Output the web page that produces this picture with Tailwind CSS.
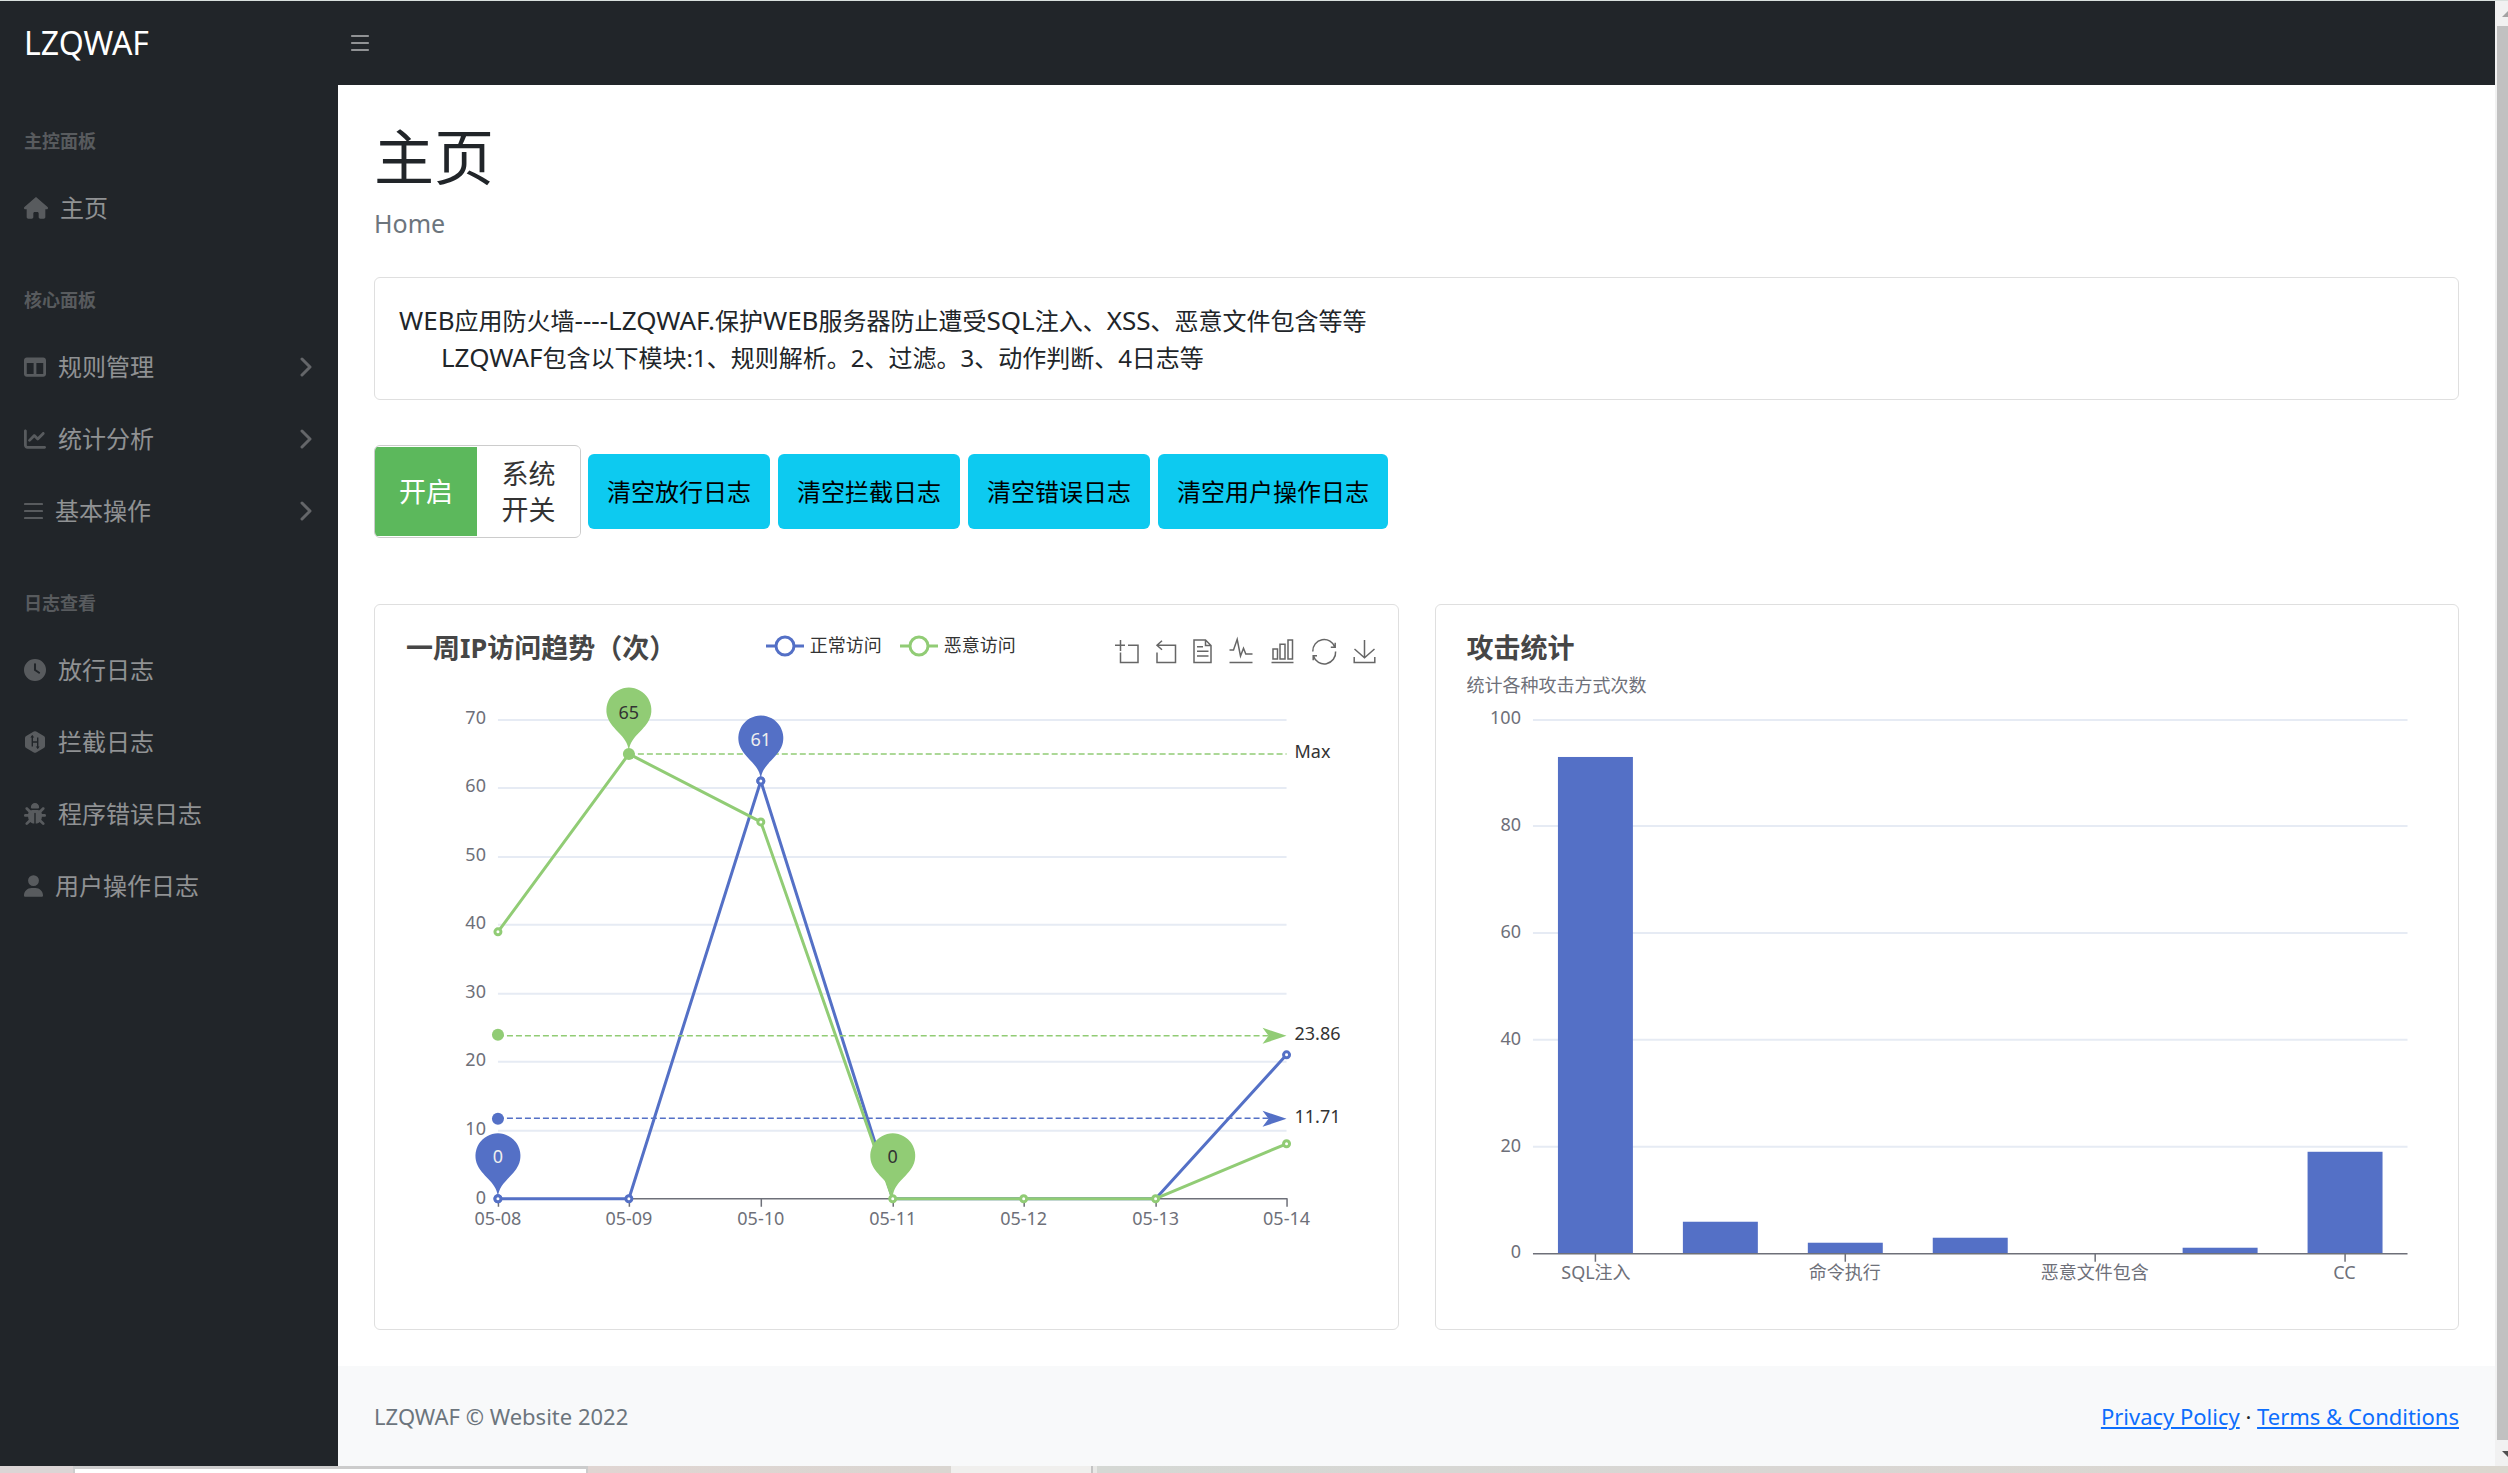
<!DOCTYPE html>
<html lang="zh-CN">
<head>
<meta charset="utf-8">
<title>LZQWAF</title>
<script src="https://cdn.jsdelivr.net/npm/@tailwindcss/browser@4"></script>
</head>
<body class="bg-white font-['Noto_Sans','Noto_Sans_CJK_SC',sans-serif] text-[24px] leading-9 text-[#212529]">
<div class="flex min-h-screen flex-col">
  <div class="h-px bg-[#d9e0dd]"></div>
  <div class="flex flex-1">
    <div class="flex min-w-0 flex-1 flex-col">
      <header class="flex h-[84px] items-center bg-[#212529]">
        <a href="#" class="w-[338px] pl-6 text-[32px] text-white">LZQWAF</a>
        <button type="button" aria-label="切换菜单" class="ml-3 text-white/50">
          <svg class="h-5 w-5" viewBox="0 0 20 20" stroke="currentColor" stroke-width="2.2" stroke-linecap="round"><path d="M2 3h16M2 10h16M2 17h16"/></svg>
        </button>
      </header>
      <div class="flex flex-1">
        <nav class="w-[338px] shrink-0 bg-[#212529] text-white/50">
          <h2 class="px-6 pt-[43px] pb-[17px] text-[18px] leading-[27px] font-bold text-white/25">主控面板</h2>
          <a href="#" class="flex h-[72px] items-center px-6">
            <svg class="mr-3 h-[22px] w-6 text-white/25" viewBox="0 0 576 512" fill="currentColor"><path d="M575.8 255.5c0 18-15 32.1-32 32.1h-32l.7 160.2c0 2.7-.2 5.4-.5 8.1V472c0 22.1-17.9 40-40 40H456c-1.1 0-2.2 0-3.3-.1c-1.4 .1-2.8 .1-4.2 .1H416 392c-22.1 0-40-17.9-40-40V448 384c0-17.7-14.3-32-32-32H256c-17.7 0-32 14.3-32 32v64 24c0 22.1-17.9 40-40 40H160 128.1c-1.5 0-3-.1-4.5-.2c-1.2 .1-2.4 .2-3.6 .2H104c-22.1 0-40-17.9-40-40V360c0-.9 0-1.9 .1-2.8V287.6H32c-18 0-32-14-32-32.1c0-9 3-17 10-24L266.4 8c7-7 15-8 22-8s15 2 21 7L564.8 231.5c8 7 12 15 11 24z"/></svg>主页</a>
          <h2 class="px-6 pt-[43px] pb-[17px] text-[18px] leading-[27px] font-bold text-white/25">核心面板</h2>
          <a href="#" class="flex h-[72px] items-center px-6">
            <svg class="mr-3 h-[22px] w-[22px] text-white/25" viewBox="0 0 512 512" fill="currentColor"><path d="M0 96C0 60.7 28.7 32 64 32H448c35.3 0 64 28.7 64 64V416c0 35.3-28.7 64-64 64H64c-35.3 0-64-28.7-64-64V96zm64 64V416H224V160H64zm384 0H288V416H448V160z"/></svg>规则管理
            <svg class="ml-auto h-5 w-4 text-white/30" viewBox="0 0 16 20" fill="none" stroke="currentColor" stroke-width="3" stroke-linecap="round" stroke-linejoin="round"><path d="M4 2l8 8-8 8"/></svg></a>
          <a href="#" class="flex h-[72px] items-center px-6">
            <svg class="mr-3 h-[22px] w-[22px] text-white/25" viewBox="0 0 512 512" fill="currentColor"><path d="M64 64c0-17.7-14.3-32-32-32S0 46.3 0 64V400c0 44.2 35.8 80 80 80H480c17.7 0 32-14.3 32-32s-14.3-32-32-32H80c-8.8 0-16-7.2-16-16V64zm406.6 86.6c12.5-12.5 12.5-32.8 0-45.3s-32.8-12.5-45.3 0L320 210.7l-57.4-57.4c-12.5-12.5-32.8-12.5-45.3 0l-112 112c-12.5 12.5-12.5 32.8 0 45.3s32.8 12.5 45.3 0L240 221.3l57.4 57.4c12.5 12.5 32.8 12.5 45.3 0l128-128z"/></svg>统计分析
            <svg class="ml-auto h-5 w-4 text-white/30" viewBox="0 0 16 20" fill="none" stroke="currentColor" stroke-width="3" stroke-linecap="round" stroke-linejoin="round"><path d="M4 2l8 8-8 8"/></svg></a>
          <a href="#" class="flex h-[72px] items-center px-6">
            <svg class="mr-3 h-[22px] w-[19px] text-white/25" viewBox="0 0 19 22" stroke="currentColor" stroke-width="2.2" stroke-linecap="round"><path d="M1 4h17M1 11h17M1 18h17"/></svg>基本操作
            <svg class="ml-auto h-5 w-4 text-white/30" viewBox="0 0 16 20" fill="none" stroke="currentColor" stroke-width="3" stroke-linecap="round" stroke-linejoin="round"><path d="M4 2l8 8-8 8"/></svg></a>
          <h2 class="px-6 pt-[43px] pb-[17px] text-[18px] leading-[27px] font-bold text-white/25">日志查看</h2>
          <a href="#" class="flex h-[72px] items-center px-6">
            <svg class="mr-3 h-[22px] w-[22px] text-white/25" viewBox="0 0 512 512" fill="currentColor"><path d="M256 0a256 256 0 1 1 0 512A256 256 0 1 1 256 0zM232 120V256c0 8 4 15.5 10.7 20l96 64c11 7.4 25.9 4.4 33.3-6.7s4.4-25.9-6.7-33.3L280 243.2V120c0-13.3-10.7-24-24-24s-24 10.7-24 24z"/></svg>放行日志</a>
          <a href="#" class="flex h-[72px] items-center px-6">
            <svg class="mr-3 h-[22px] w-[22px]" viewBox="0 0 22 22"><path fill="#595c5f" d="M9.8 .6Q11 0 12.2 .6L19.8 4.9Q21 5.6 21 6.9V15.1Q21 16.4 19.8 17.1L12.2 21.4Q11 22 9.8 21.4L2.2 17.1Q1 16.4 1 15.1V6.9Q1 5.6 2.2 4.9Z"/><path fill="none" stroke="#212529" stroke-width="1.4" d="M8.3 4.8V15.6M13.7 6.4V17.2M8.3 11h5.4"/><path fill="#212529" d="M6.4 6.6 8.3 4l1.9 2.6zM11.8 15.4l1.9 2.6 1.9-2.6z"/></svg>拦截日志</a>
          <a href="#" class="flex h-[72px] items-center px-6">
            <svg class="mr-3 h-[22px] w-[22px] text-white/25" viewBox="0 0 512 512" fill="currentColor"><path d="M256 0c53 0 96 43 96 96v3.6c0 15.7-12.7 28.4-28.4 28.4H188.4c-15.7 0-28.4-12.7-28.4-28.4V96c0-53 43-96 96-96zM41.4 105.4c12.5-12.5 32.8-12.5 45.3 0l64 64c.7 .7 1.3 1.4 1.9 2.1c14.2-7.3 30.4-11.4 47.5-11.4H312c17.1 0 33.2 4.1 47.5 11.4c.6-.7 1.2-1.4 1.9-2.1l64-64c12.5-12.5 32.8-12.5 45.3 0s12.5 32.8 0 45.3l-64 64c-.7 .7-1.4 1.3-2.1 1.9c6.2 12 10.1 25.3 11.1 39.5H480c17.7 0 32 14.3 32 32s-14.3 32-32 32H416c0 24.6-5.5 47.8-15.4 68.6c2.2 1.3 4.2 2.9 6 4.8l64 64c12.5 12.5 12.5 32.8 0 45.3s-32.8 12.5-45.3 0l-63.1-63.1c-24.5 21.8-55.8 36.2-90.3 39.6V240c0-8.8-7.2-16-16-16s-16 7.2-16 16V479.2c-34.5-3.4-65.8-17.8-90.3-39.6L86.6 502.6c-12.5 12.5-32.8 12.5-45.3 0s-12.5-32.8 0-45.3l64-64c1.9-1.9 3.9-3.4 6-4.8C101.5 367.8 96 344.6 96 320H32c-17.7 0-32-14.3-32-32s14.3-32 32-32H96.3c1.1-14.1 5-27.5 11.1-39.5c-.7-.6-1.4-1.2-2.1-1.9l-64-64c-12.5-12.5-12.5-32.8 0-45.3z"/></svg>程序错误日志</a>
          <a href="#" class="flex h-[72px] items-center px-6">
            <svg class="mr-3 h-[22px] w-[19px] text-white/25" viewBox="0 0 448 512" fill="currentColor"><path d="M224 256A128 128 0 1 0 224 0a128 128 0 1 0 0 256zm-45.7 48C79.8 304 0 383.8 0 482.3C0 498.7 13.3 512 29.7 512H418.3c16.4 0 29.7-13.3 29.7-29.7C448 383.8 368.2 304 269.7 304H178.3z"/></svg>用户操作日志</a>
        </nav>
        <div class="flex min-w-0 flex-1 flex-col">
          <main class="flex-1 px-9 pt-9">
            <h1 class="mb-3 text-[60px] leading-[72px]">主页</h1>
            <p class="mb-9 text-[25px] text-[#6c757d]">Home</p>
            <section class="h-[123px] rounded-md border border-[#dfdfdf] px-6 py-6">
              <p><span class="text-[26px]">WEB</span>应用防火墙<span class="text-[26px]">----LZQWAF.</span>保护<span class="text-[26px]">WEB</span>服务器防止遭受<span class="text-[26px]">SQL</span>注入、<span class="text-[26px]">XSS</span>、恶意文件包含等等</p>
              <p class="pl-[42px]"><span class="text-[26px]">LZQWAF</span>包含以下模块:1、规则解析。2、过滤。3、动作判断、4日志等</p>
            </section>
            <div class="mt-[45px] flex items-center gap-2">
              <button type="button" role="switch" aria-checked="true" class="-mr-px flex h-[93px] overflow-hidden rounded-md border border-[#ccc] py-px text-[27px]">
                <span class="flex w-[102px] items-center justify-center self-stretch bg-[#5cb85c] text-white">开启</span>
                <span class="flex w-[103px] items-center justify-center self-stretch bg-white text-[#333]">系统<br>开关</span>
              </button>
              <button type="button" class="h-[75px] rounded-md bg-[#0dcaf0] px-[19px] text-black">清空放行日志</button>
              <button type="button" class="h-[75px] rounded-md bg-[#0dcaf0] px-[19px] text-black">清空拦截日志</button>
              <button type="button" class="h-[75px] rounded-md bg-[#0dcaf0] px-[19px] text-black">清空错误日志</button>
              <button type="button" class="h-[75px] rounded-md bg-[#0dcaf0] px-[19px] text-black">清空用户操作日志</button>
            </div>

            <div class="mt-[66px] mb-9 grid grid-cols-2 gap-9">
              <section class="rounded-md border border-[#dfdfdf]">
                <div class="grid grid-cols-[1fr_auto_1fr] items-center pt-6 pr-[22px] pl-[31px]">
                  <h2 class="pb-0.5 text-[27px] leading-[38px] font-bold text-[#464646]">一周IP访问趋势（次）</h2>
                  <div class="flex items-center gap-[18px] pb-2 text-[18px] leading-6 text-[#333]">
                    <span class="flex items-center gap-1.5"><svg class="h-6 w-[38px]" viewBox="0 0 38 24" fill="#fff" stroke="#5470c6" stroke-width="3"><path d="M0 13h38"/><circle cx="19" cy="13" r="9"/></svg>正常访问</span>
                    <span class="flex items-center gap-1.5"><svg class="h-6 w-[38px]" viewBox="0 0 38 24" fill="#fff" stroke="#91cc75" stroke-width="3"><path d="M0 13h38"/><circle cx="19" cy="13" r="9"/></svg>恶意访问</span>
                  </div>
                  <div class="flex justify-end gap-4 text-[#666]">
                    <button type="button" aria-label="区域缩放"><svg class="block h-7 w-6 overflow-visible" viewBox="0 -4 24 28" fill="none" stroke="currentColor" stroke-width="1.5"><path d="M3 6.3H13M8.5 1V12M16 6.3H26V23.5H8.5V13.5"/></svg></button>
                    <button type="button" aria-label="区域缩放还原"><svg class="block h-7 w-6 overflow-visible" viewBox="0 -4 24 28" fill="none" stroke="currentColor" stroke-width="1.5"><path d="M10 1.7L5 6.3L10 10.7M5 6.3H23.5V23.5H5V13.5"/></svg></button>
                    <button type="button" aria-label="数据视图"><svg class="block h-7 w-6 overflow-visible" viewBox="0 -4 24 28" fill="none" stroke="currentColor" stroke-width="1.5"><path d="M2 1H13.5L19 6.5V23.5H2ZM13.5 1V6.5H19M5 7.7H11M5 12.3H16.5M5 17H16.5"/></svg></button>
                    <button type="button" aria-label="切换为折线图"><svg class="block h-7 w-6 overflow-visible" viewBox="0 -4 24 28" fill="none" stroke="currentColor" stroke-width="1.5"><path d="M-2.5 11H1.5L5.2 .3L8.5 17L11.5 9.3L13.8 15H20.5M-2.5 23.5H20.5"/></svg></button>
                    <button type="button" aria-label="切换为柱状图"><svg class="block h-7 w-6 overflow-visible" viewBox="0 -4 24 28" fill="none" stroke="currentColor" stroke-width="1.5"><path d="M1 10H5.5V20H1ZM8 5.3H13V20H8ZM16 1H20.5V20H16ZM-.5 23.5H21.5"/></svg></button>
                    <button type="button" aria-label="还原"><svg class="block h-7 w-6 overflow-visible" viewBox="0 -4 24 28" fill="none" stroke="currentColor" stroke-width="1.5"><path d="M.8 12.5A11.4 11.4 0 0 1 23 8.3M18.8 8.3H23.2V3.8M23.6 12.5A11.4 11.4 0 0 1 1.4 17M1.2 21.2V16.7H5"/></svg></button>
                    <button type="button" aria-label="保存为图片"><svg class="block h-7 w-6 overflow-visible" viewBox="0 -4 24 28" fill="none" stroke="currentColor" stroke-width="1.5"><path d="M12.5 1V18.7M2.5 10L12.5 18.7L22.5 10M2.2 18V23.5H22.8V18"/></svg></button>
                  </div>
                </div>
                <svg class="block h-auto w-full" viewBox="0 0 1023 660" role="img" aria-label="一周IP访问趋势" font-size="18">
                  <defs><path id="pin" d="M-20.3-33.2A22.5 22.5 0 1 1 20.3-33.2C14.5-21 0-15.7 0 0C0-15.7-14.5-21-20.3-33.2Z"/></defs>
                  <path stroke="#e6ebf4" stroke-width="2" d="M123 51H912M123 119H912M123 188H912M123 256H912M123 325H912M123 393H912M123 462H912"/>
                  <path fill="none" stroke="#6e7079" stroke-width="1.5" d="M123 530H913M123.5 530v8M254.5 530v8M386.5 530v8M518.5 530v8M649.5 530v8M781.5 530v8M912.5 530v8"/>
                  <g fill="#6e7079" text-anchor="end">
                    <text x="111" y="55">70</text><text x="111" y="123">60</text><text x="111" y="192">50</text><text x="111" y="260">40</text><text x="111" y="329">30</text><text x="111" y="397">20</text><text x="111" y="466">10</text><text x="111" y="535">0</text>
                  </g>
                  <g fill="#6e7079" text-anchor="middle">
                    <text x="123" y="556">05-08</text><text x="254" y="556">05-09</text><text x="386" y="556">05-10</text><text x="518" y="556">05-11</text><text x="649" y="556">05-12</text><text x="781" y="556">05-13</text><text x="912" y="556">05-14</text>
                  </g>
                  <g stroke="#5470c6" stroke-width="3" fill="none" stroke-linejoin="bevel">
                    <path d="M123 530H254L386 112L518 530H781L912 386"/>
                    <g fill="#fff"><circle cx="123" cy="530" r="3"/><circle cx="254" cy="530" r="3"/><circle cx="386" cy="112" r="3"/><circle cx="912" cy="386" r="3"/></g>
                  </g>
                  <g stroke="#91cc75" stroke-width="3" fill="none" stroke-linejoin="bevel">
                    <path d="M123 263L254 85L386 153L518 530H781L912 475"/>
                    <g fill="#fff"><circle cx="123" cy="263" r="3"/><circle cx="386" cy="153" r="3"/><circle cx="649" cy="530" r="3"/><circle cx="781" cy="530" r="3"/><circle cx="912" cy="475" r="3"/></g>
                  </g>
                  <g stroke-width="1.5" stroke-dasharray="6 3"><path stroke="#5470c6" d="M123 449.5H894"/><path stroke="#91cc75" d="M123 367H894M254 85H912"/></g>
                  <g fill="#5470c6"><circle cx="123" cy="450" r="6"/><path d="M912 450l-24 8l6-8l-6-8z"/><use href="#pin" x="123" y="530"/><use href="#pin" x="386" y="112"/></g>
                  <g fill="#91cc75"><circle cx="123" cy="366" r="6"/><circle cx="254" cy="85" r="6"/><path d="M912 367l-24 8l6-8l-6-8z"/><use href="#pin" x="254" y="84"/><use href="#pin" x="518" y="530"/></g>
                  <g stroke-width="3" fill="#fff"><circle cx="123" cy="530" r="3" stroke="#5470c6"/><circle cx="386" cy="112" r="3" stroke="#5470c6"/><circle cx="518" cy="530" r="3" stroke="#91cc75"/></g>
                  <g text-anchor="middle" fill="#eee"><text x="123" y="494">0</text><text x="386" y="77">61</text></g>
                  <g text-anchor="middle" fill="#333"><text x="254" y="50">65</text><text x="518" y="494">0</text></g>
                  <g fill="#333"><text x="920" y="89">Max</text><text x="920" y="371">23.86</text><text x="920" y="454">11.71</text></g>
                </svg>
              </section>

              <section class="rounded-md border border-[#dfdfdf]">
                <div class="px-[31px] pt-6">
                  <h2 class="pb-0.5 text-[27px] leading-[38px] font-bold text-[#464646]">攻击统计</h2>
                  <p class="text-[18px] leading-8 text-[#6e7079]">统计各种攻击方式次数</p>
                </div>
                <svg class="block h-auto w-full" viewBox="0 0 1023 628" role="img" aria-label="攻击统计" font-size="18">
                  <path stroke="#e6ebf4" stroke-width="2" d="M97 19H972M97 125H972M97 232H972M97 339H972M97 446H972"/>
                  <g fill="#5470c6"><rect x="122" y="56" width="75" height="497"/><rect x="247" y="521" width="75" height="32"/><rect x="372" y="542" width="75" height="11"/><rect x="497" y="537" width="75" height="16"/><rect x="747" y="547" width="75" height="6"/><rect x="872" y="451" width="75" height="102"/></g>
                  <path fill="none" stroke="#6e7079" stroke-width="1.5" d="M97 553H972M159.5 553v8M409.5 553v8M659.5 553v8M909.5 553v8"/>
                  <g fill="#6e7079" text-anchor="end"><text x="85" y="23">100</text><text x="85" y="130">80</text><text x="85" y="237">60</text><text x="85" y="344">40</text><text x="85" y="451">20</text><text x="85" y="557">0</text></g>
                  <g fill="#6e7079" text-anchor="middle"><text x="160" y="578">SQL注入</text><text x="409" y="578">命令执行</text><text x="659" y="578">恶意文件包含</text><text x="909" y="578">CC</text></g>
                </svg>
              </section>
            </div>
          </main>
          <footer class="flex h-[100px] items-center justify-between bg-[#f8f9fa] px-9 text-[22px]">
            <span class="text-[#6c757d]">LZQWAF © Website 2022</span>
            <span><a href="#" class="text-[#0d6efd] underline">Privacy Policy</a> · <a href="#" class="text-[#0d6efd] underline">Terms &amp; Conditions</a></span>
          </footer>
        </div>
      </div>
    </div>
    <!-- scroll track -->
    <div class="flex w-[13px] shrink-0 flex-col overflow-hidden bg-[#f1f1f1] pl-0.5">
      <svg class="h-[25px] w-[11px] shrink-0" viewBox="0 0 11 25"><path fill="#a3a3a3" d="M5 16l7-7v7z"/></svg>
      <div class="flex-1 bg-[#c1c1c1]"></div>
      <svg class="h-[26px] w-[11px] shrink-0" viewBox="0 0 11 26"><path fill="#505050" d="M5 11h7v7z"/></svg>
    </div>
  </div>
  <!-- edge of the desktop under the window -->
  <div class="flex h-[7px]">
    <div class="w-[73px] bg-[#dcd5d5]"></div>
    <div class="w-[515px] border-x-2 border-t-3 border-[#ccc] bg-white"></div>
    <div class="w-[363px] bg-linear-to-r from-[#e0d5d2] to-[#dad6d1]"></div>
    <div class="w-[140px] bg-[#f0efed]"></div>
    <div class="w-[6px] border-l-2 border-[#c4c4c4] bg-[#e8e8e6]"></div>
    <div class="flex-1 bg-linear-to-r from-[#d5d8d4] via-[#d9d6d3] to-[#dbd7cf]"></div>
  </div>
</div>
</body>
</html>
